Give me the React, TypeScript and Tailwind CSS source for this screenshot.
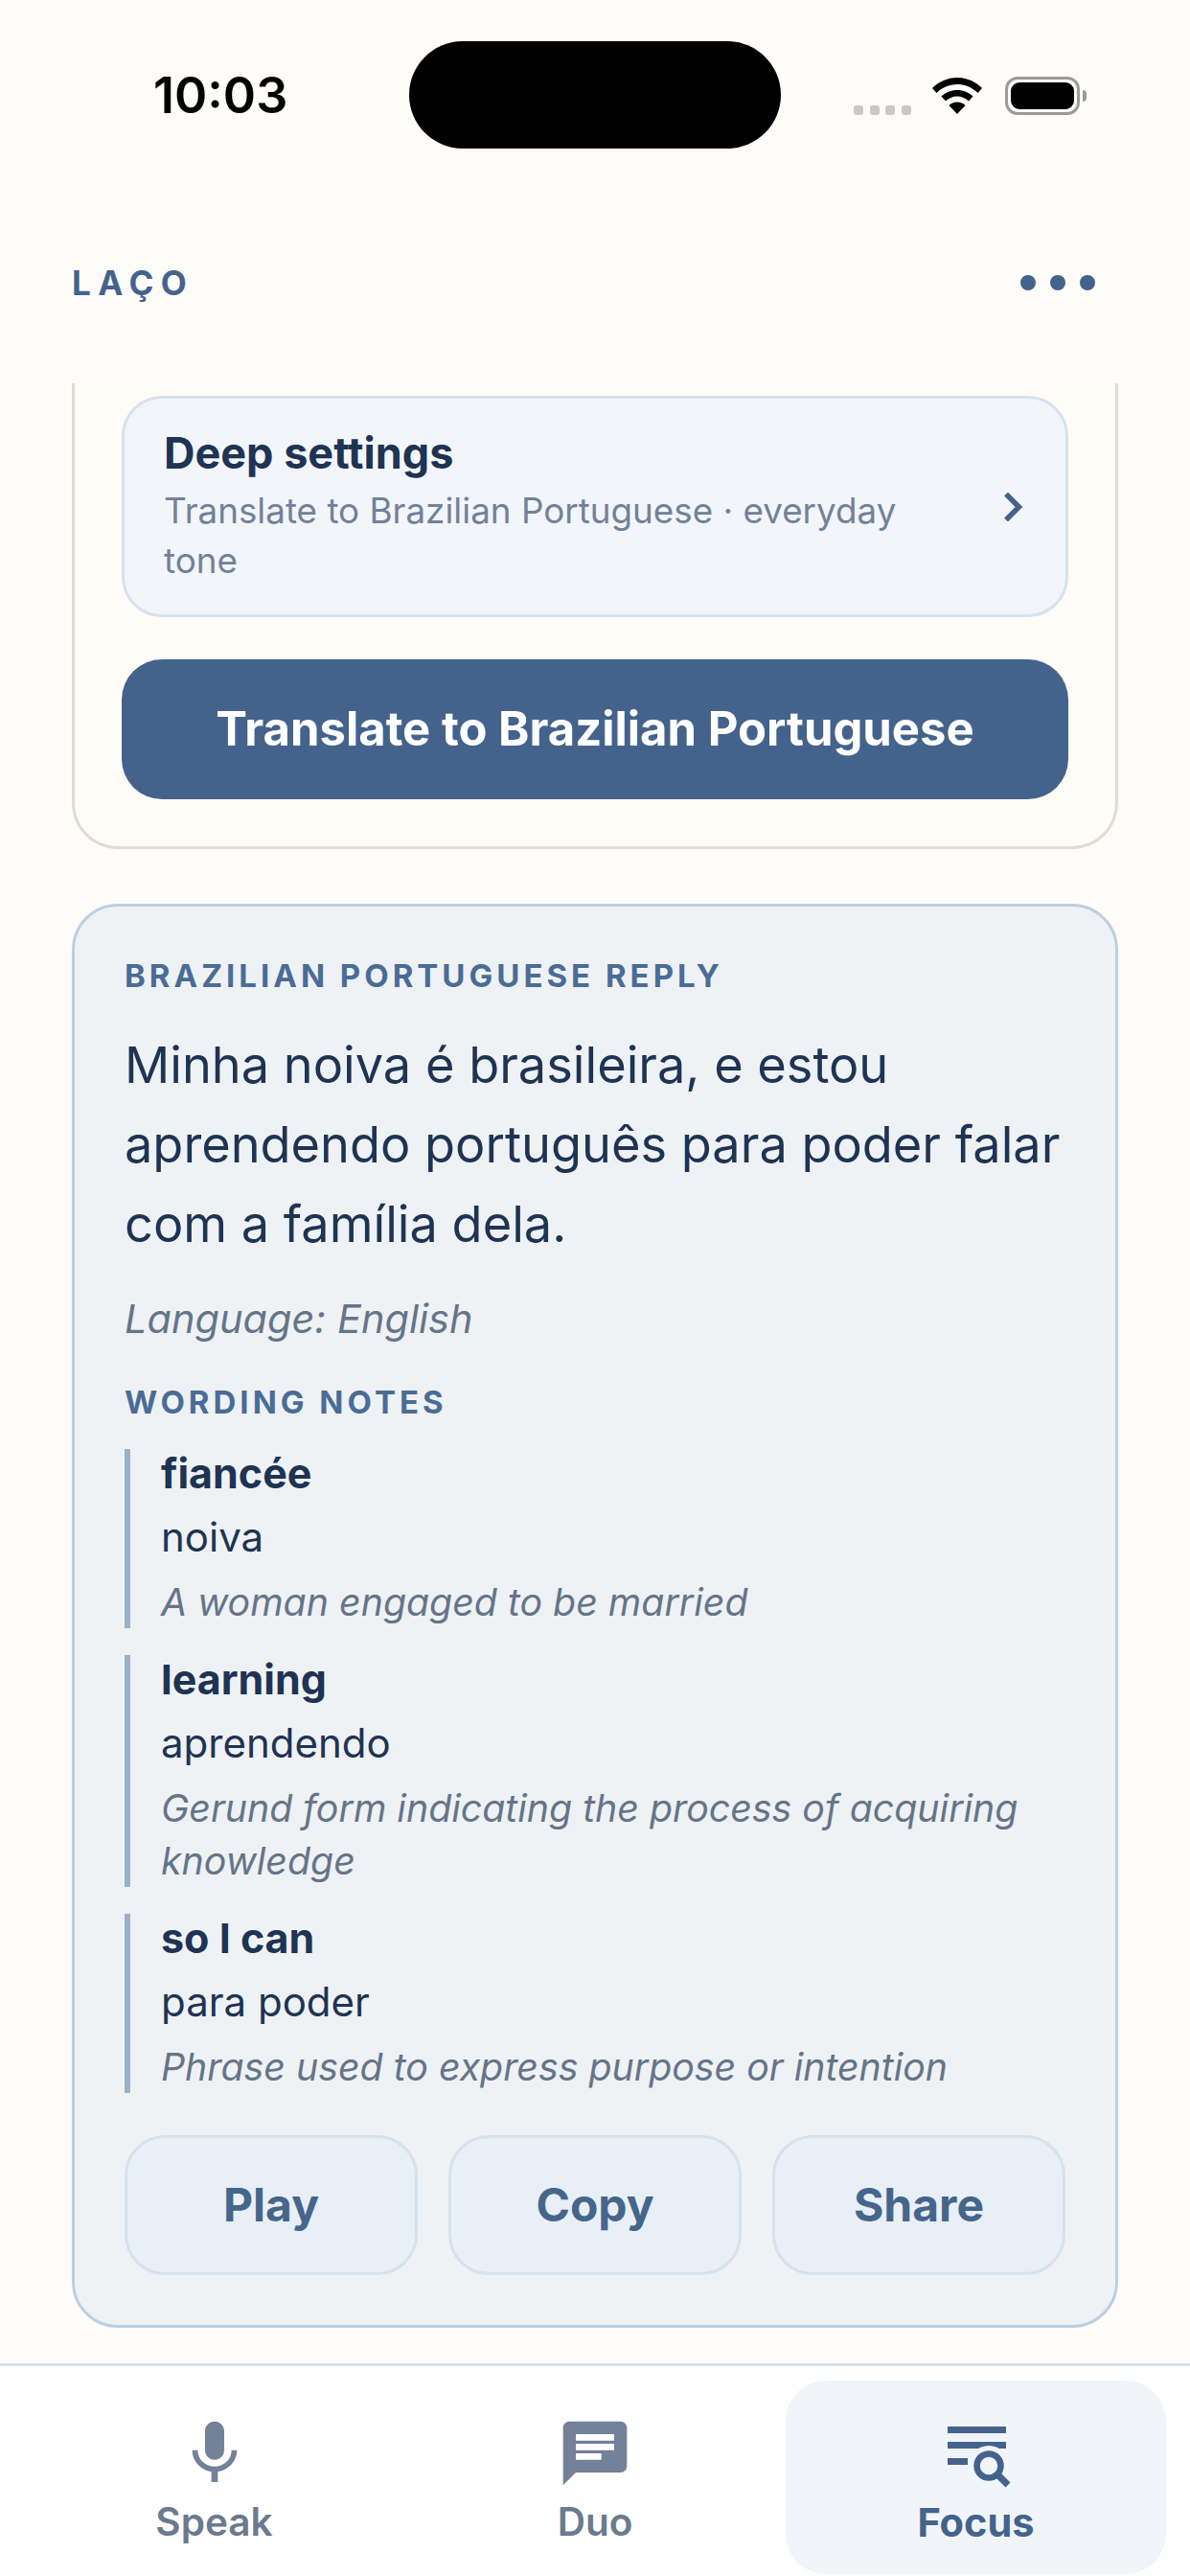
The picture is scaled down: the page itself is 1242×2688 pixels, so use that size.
import React from "react";

const notes = [
  { en: "fiancée", pt: "noiva", def: "A woman engaged to be married" },
  { en: "learning", pt: "aprendendo", def: "Gerund form indicating the process of acquiring knowledge" },
  { en: "so I can", pt: "para poder", def: "Phrase used to express purpose or intention" },
];

function Chat() {
  return (
    <svg viewBox="0 0 24 24" className="h-[80px] w-[80px]" fill="#738199">
      <path d="M20 2H4c-1.1 0-1.99.9-1.99 2L2 22l4-4h14c1.1 0 2-.9 2-2V4c0-1.1-.9-2-2-2zM6 9h12v2H6V9zm8 5H6v-2h8v2zm4-6H6V6h12v2z" />
    </svg>
  );
}

function Mic() {
  return (
    <svg viewBox="0 0 24 24" className="h-[80px] w-[80px]" fill="#738199">
      <path d="M12 14c1.66 0 2.99-1.34 2.99-3L15 5c0-1.66-1.34-3-3-3S9 3.34 9 5v6c0 1.66 1.34 3 3 3zm5.3-3c0 3-2.54 5.1-5.3 5.1S6.7 14 6.7 11H5c0 3.41 2.72 6.23 6 6.72V21h2v-3.28c3.28-.48 6-3.3 6-6.72h-1.7z" />
    </svg>
  );
}

function FocusIcon() {
  return (
    <svg viewBox="0 0 80 80" className="h-[80px] w-[80px]" fill="none">
      <path d="M10 12h61v7H10zM10 28h61v7H10zM10 45h21v7H10z" fill="#44638c" />
      <circle cx="53" cy="53" r="21" fill="#f1f5f9" />
      <circle cx="53" cy="53" r="12.500" stroke="#44638c" strokeWidth="6.500" />
      <path d="M62 62l11 11" stroke="#44638c" strokeWidth="7" />
    </svg>
  );
}

function Tab({ label, active, children }: { label: string; active?: boolean; children: React.ReactNode }) {
  return (
    <div
      className={
        active
          ? "flex h-[202px] w-[397px] flex-col items-center rounded-[42px] bg-[#f1f5f9] pt-[36px]"
          : "flex h-[202px] w-[397px] flex-col items-center pt-[36px]"
      }
    >
      {children}
      <span
        className={
          active
            ? "mt-[10px] text-[41.500px] leading-[44px] font-bold text-[#44638c]"
            : "mt-[10px] text-[40.500px] leading-[44px] font-semibold text-[#6b7a8f]"
        }
      >
        {label}
      </span>
    </div>
  );
}

export default function App() {
  return (
    <div className="flex h-[2688px] w-[1242px] flex-col overflow-hidden bg-[#fdfcf8] font-['Inter',sans-serif]">
      {/* status bar */}
      <div className="flex h-[155px] shrink-0 items-start pt-[43px]">
        <div className="w-[427px] pl-[160px] pt-[26px] text-[52px] leading-[62px] font-semibold text-black">10:03</div>
        <div className="h-[112px] w-[388px] rounded-full bg-black" />
        <div className="flex items-start pl-[76px] pt-[38px]">
          <div className="flex gap-[6.500px] pt-[29px]">
            <span className="h-[10px] w-[10px] rounded-[3px] bg-[#c9c9c7]" />
            <span className="h-[10px] w-[10px] rounded-[3px] bg-[#c9c9c7]" />
            <span className="h-[10px] w-[10px] rounded-[3px] bg-[#c9c9c7]" />
            <span className="h-[10px] w-[10px] rounded-[3px] bg-[#c9c9c7]" />
          </div>
          <svg viewBox="0 0 52 38" className="ml-[22px] h-[38px] w-[52px]" fill="#000">
            <path d="M26 0C16 0 7 4 0 11l4.500 5C10 10.500 17.500 7 26 7s16 3.500 21.500 9L52 11C45 4 36 0 26 0z" />
            <path d="M26 13c-6.500 0-12 2.500-16.500 6.500l4.500 5c3-3 7.500-5 12-5s9 2 12 5l4.500-5C38 15.500 32.500 13 26 13z" />
            <path d="M26 25.500c-3.500 0-6.500 1.300-8.500 3.500L26 38l8.500-9c-2-2.200-5-3.500-8.500-3.500z" />
          </svg>
          <div className="ml-[24px] -mt-[1px] flex h-[40px] w-[78px] items-center justify-center rounded-[13px] border-[3px] border-[#9b9b98]">
            <div className="h-[28px] w-[66px] rounded-[9px] bg-black" />
          </div>
          <div className="ml-[3px] mt-[13px] h-[12px] w-[4px] rounded-r-full bg-[#9b9b98]" />
        </div>
      </div>

      {/* header */}
      <div className="flex h-[245px] shrink-0 items-start justify-between pl-[75px] pr-[99px] pt-[119px]">
        <span className="text-[35px] leading-[42px] font-bold tracking-[7.500px] text-[#44638c]">LAÇO</span>
        <div className="flex gap-[15px] pt-[13px]">
          <span className="h-[16px] w-[16px] rounded-full bg-[#44638c]" />
          <span className="h-[16px] w-[16px] rounded-full bg-[#44638c]" />
          <span className="h-[16px] w-[16px] rounded-full bg-[#44638c]" />
        </div>
      </div>

      {/* scroll content */}
      <div className="flex min-h-0 flex-1 flex-col overflow-hidden px-[75px]">
        <div className="rounded-b-[48px] border-x-[3px] border-b-[3px] border-[#e2dbd1] bg-[#fffcf8] px-[49px] pb-[49px] pt-[13px]">
          <div className="flex h-[231px] items-center justify-between rounded-[42px] border-[3px] border-[#d8e2ec] bg-[#f2f6fa] pl-[41px] pr-[44px]">
            <div className="w-[800px]">
              <div className="text-[45px] leading-[54px] font-bold text-[#1f3353]">Deep settings</div>
              <div className="mt-[7px] text-[36.800px] leading-[52px] text-[#738199]">Translate to Brazilian Portuguese · everyday tone</div>
            </div>
            <svg viewBox="0 0 20 30" className="h-[30px] w-[20px]" fill="none" stroke="#44638c" strokeWidth="5.500">
              <path d="M2 1.500L15.500 15 2 28.500" />
            </svg>
          </div>
          <div className="mt-[44px] flex h-[146px] items-center justify-center rounded-[42px] bg-[#44638c] text-[49px] font-bold text-white">
            Translate to Brazilian Portuguese
          </div>
        </div>

        <div className="mt-[57px] rounded-[48px] border-[3px] border-[#bccfe0] bg-[#eef2f5] px-[52px] pb-[52px] pt-[51px]">
          <div className="text-[33px] leading-[42px] font-bold tracking-[4px] text-[#4a6c96]">BRAZILIAN PORTUGUESE REPLY</div>
          <div className="mt-[31px] text-[52.300px] leading-[83px] text-[#1f3353]">
            Minha noiva é brasileira, e estou aprendendo português para poder falar com a família dela.
          </div>
          <div className="mt-[30px] text-[41.500px] leading-[54px] italic text-[#667488]">Language: English</div>
          <div className="mt-[39px] text-[33px] leading-[42px] font-bold tracking-[4px] text-[#4a6c96]">WORDING NOTES</div>
          <div className="mt-[28px] flex flex-col gap-[28px]">
            {notes.map((n) => (
              <div key={n.en} className="border-l-[6px] border-[#9bb0ca] pl-[32px]">
                <div className="text-[43px] leading-[50px] font-bold text-[#1f3353]">{n.en}</div>
                <div className="mt-[17px] text-[42px] leading-[50px] text-[#1f3353]">{n.pt}</div>
                <div className="mt-[15px] text-[39.300px] leading-[55px] italic text-[#667488]">{n.def}</div>
              </div>
            ))}
          </div>
          <div className="mt-[44px] flex gap-[32px]">
            {["Play", "Copy", "Share"].map((b) => (
              <div
                key={b}
                className="flex h-[146px] w-[306px] items-center justify-center rounded-[42px] border-[3px] border-[#d6e1ec] bg-[#e8eff6] text-[48px] font-bold text-[#45668a]"
              >
                {b}
              </div>
            ))}
          </div>
        </div>
      </div>

      {/* tab bar */}
      <div className="flex h-[222px] shrink-0 justify-between border-t-[3px] border-[#d8e2ec] bg-white px-[25px] pt-[15px]">
        <Tab label="Speak">
          <Mic />
        </Tab>
        <Tab label="Duo">
          <Chat />
        </Tab>
        <Tab label="Focus" active>
          <FocusIcon />
        </Tab>
      </div>
    </div>
  );
}
